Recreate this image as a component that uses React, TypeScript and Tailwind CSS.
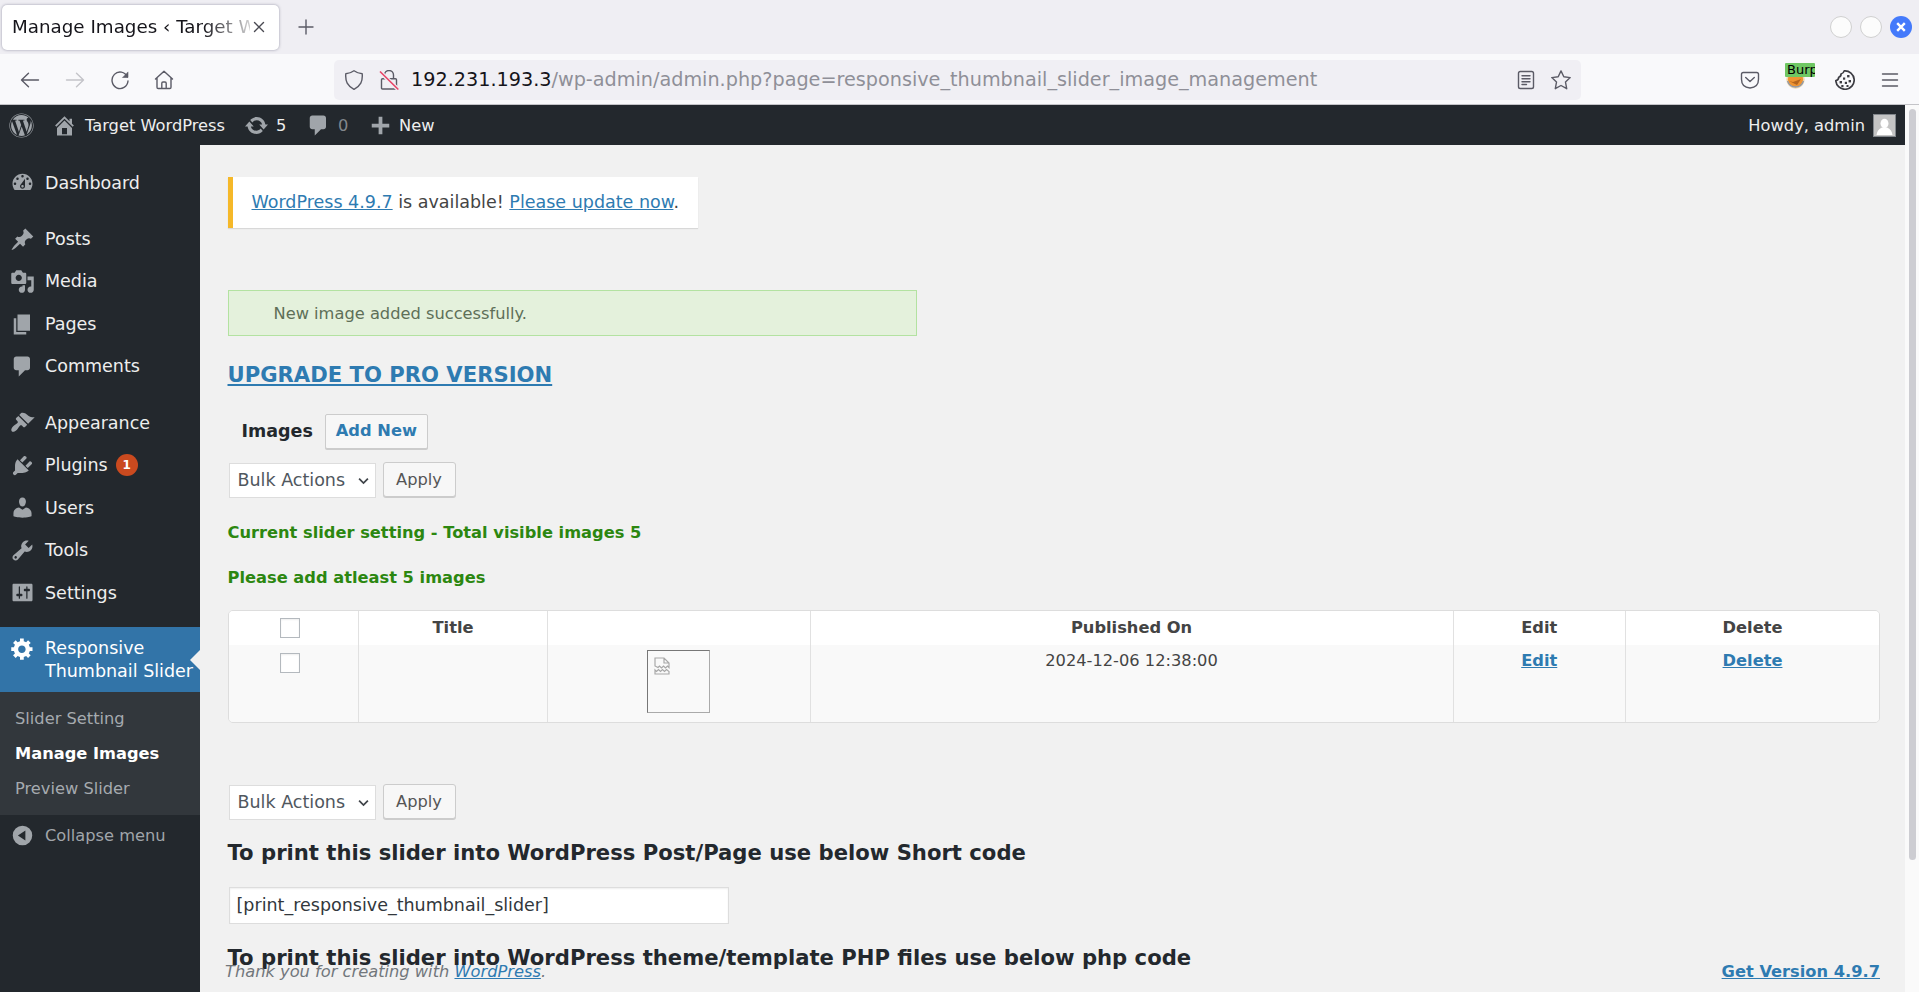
import type { ReactNode } from "react";
import { FaWordpress } from "react-icons/fa";

const dash = {
  dashboard:
    "M3.76 16h12.48c1.1-1.37 1.76-3.11 1.76-5 0-4.42-3.58-8-8-8s-8 3.58-8 8c0 1.89.66 3.63 1.76 5zM10 4c.55 0 1 .45 1 1s-.45 1-1 1-1-.45-1-1 .45-1 1-1zM6 6c.55 0 1 .45 1 1s-.45 1-1 1-1-.45-1-1 .45-1 1-1zm8 0c.55 0 1 .45 1 1s-.45 1-1 1-1-.45-1-1 .45-1 1-1zm-5.37 5.55L12 7v6c0 1.1-.9 2-2 2s-2-.9-2-2c0-.57.24-1.08.63-1.45zM4 10c.55 0 1 .45 1 1s-.45 1-1 1-1-.45-1-1 .45-1 1-1zm12 0c.55 0 1 .45 1 1s-.45 1-1 1-1-.45-1-1 .45-1 1-1zm-5 3c0-.55-.45-1-1-1s-1 .45-1 1 .45 1 1 1 1-.45 1-1z",
  post: "M10.44 3.02l1.82-1.82 6.36 6.35-1.83 1.82c-1.05-.68-2.48-.57-3.41.36l-.75.75c-.92.93-1.04 2.35-.35 3.41l-1.83 1.82-2.41-2.41-2.8 2.79c-.42.42-3.38 2.71-3.8 2.29s1.86-3.39 2.28-3.81l2.79-2.79L4.1 9.36l1.83-1.82c1.05.69 2.48.57 3.4-.36l.75-.75c.93-.92 1.05-2.35.36-3.41z",
  media:
    "M13 11V4c0-.55-.45-1-1-1h-1.67L9 1H5L3.67 3H2c-.55 0-1 .45-1 1v7c0 .55.45 1 1 1h10c.55 0 1-.45 1-1zM7 4.5c1.38 0 2.5 1.12 2.5 2.5S8.38 9.5 7 9.5 4.5 8.38 4.5 7 5.62 4.5 7 4.5zM14 6h5v10.5c0 1.38-1.12 2.5-2.5 2.5S14 17.88 14 16.5s1.12-2.5 2.5-2.5c.17 0 .34.02.5.05V9h-3V6zm-4 8.05V13h2v3.5c0 1.38-1.12 2.5-2.5 2.5S7 17.88 7 16.5 8.12 14 9.5 14c.17 0 .34.02.5.05z",
  page: "M6 15V2h10v13H6zm-1 1h8v2H3V5h2v11z",
  comments:
    "M5 2h9c1.1 0 2 .9 2 2v7c0 1.1-.9 2-2 2h-2l-5 5v-5H5c-1.1 0-2-.9-2-2V4c0-1.1.9-2 2-2z",
  appearance:
    "M14.48 11.06L7.41 3.99l1.5-1.5c.5-.56 2.3-.47 3.51.32 1.21.8 1.43 1.28 2.91 2.1 1.18.64 2.45 1.26 4.45.85zm-.71.71L6.7 4.7 4.93 6.47c-.39.39-.39 1.02 0 1.41l1.06 1.06c.39.39.39 1.03 0 1.42-.6.6-1.43 1.11-2.21 1.69-.35.26-.7.53-1.01.84C1.43 14.23.4 16.08 1.4 17.07c.99 1 2.84-.03 4.18-1.36.31-.31.58-.66.85-1.02.57-.78 1.08-1.61 1.69-2.21.39-.39 1.02-.39 1.41 0l1.06 1.06c.39.39 1.02.39 1.41 0z",
  plugins:
    "M13.11 4.36L9.87 7.6 8 5.73l3.24-3.24c.35-.34 1.05-.2 1.56.32.52.51.66 1.21.31 1.55zm-8 1.77l.91-1.12 9.01 9.01-1.19.84c-.71.71-2.63 1.16-3.82 1.16H6.14L4.9 17.26c-.59.59-1.54.59-2.12 0-.59-.58-.59-1.53 0-2.12l1.24-1.24v-3.88c0-1.13.4-3.19 1.09-3.89zm7.26 3.97l3.24-3.24c.34-.35 1.04-.21 1.55.31.52.51.66 1.21.31 1.55l-3.24 3.25z",
  users:
    "M10 9.25c-2.27 0-2.73-3.44-2.73-3.44C7 4.02 7.82 2 9.97 2c2.16 0 2.98 2.02 2.71 3.81 0 0-.41 3.44-2.68 3.44zm0 2.57L12.72 10c2.39 0 4.52 2.33 4.52 4.53v2.49s-3.65 1.13-7.24 1.13c-3.65 0-7.24-1.13-7.24-1.13v-2.49c0-2.25 1.94-4.48 4.47-4.48z",
  tools:
    "M16.68 9.77c-1.34 1.34-3.3 1.67-4.95.99l-5.41 6.52c-.99.99-2.59.99-3.58 0s-.99-2.59 0-3.57l6.52-5.42c-.68-1.65-.35-3.61.99-4.95 1.28-1.28 3.12-1.62 4.72-1.06l-2.89 2.89 2.82 2.82 2.86-2.87c.53 1.58.18 3.39-1.08 4.65zM3.81 16.21c.4.39 1.04.39 1.43 0 .4-.4.4-1.04 0-1.43-.39-.4-1.03-.4-1.43 0-.39.39-.39 1.03 0 1.43z",
  settings:
    "M18 16V4c0-.55-.45-1-1-1H3c-.55 0-1 .45-1 1v12c0 .55.45 1 1 1h14c.55 0 1-.45 1-1zM8 11h1c.55 0 1 .45 1 1s-.45 1-1 1H8v1.5c0 .28-.22.5-.5.5s-.5-.22-.5-.5V13H6c-.55 0-1-.45-1-1s.45-1 1-1h1V5.5c0-.28.22-.5.5-.5s.5.22.5.5V11zm5-2h-1c-.55 0-1-.45-1-1s.45-1 1-1h1V5.5c0-.28.22-.5.5-.5s.5.22.5.5V7h1c.55 0 1 .45 1 1s-.45 1-1 1h-1v5.5c0 .28-.22.5-.5.5s-.5-.22-.5-.5V9z",
  generic:
    "M18 12h-2.18c-.17.7-.44 1.35-.81 1.93l1.54 1.54-2.1 2.1-1.54-1.54c-.58.36-1.23.63-1.91.79V19H8v-2.18c-.68-.16-1.33-.43-1.91-.79l-1.54 1.54-2.12-2.12 1.54-1.54c-.36-.58-.63-1.23-.79-1.91H1V9.03h2.17c.16-.7.44-1.35.8-1.94L2.43 5.55l2.1-2.1 1.54 1.54c.58-.37 1.24-.64 1.93-.81V2h3v2.18c.68.16 1.33.43 1.91.79l1.54-1.54 2.12 2.12-1.54 1.54c.36.59.64 1.24.8 1.94H18V12zm-8.5 1.5c1.66 0 3-1.34 3-3s-1.34-3-3-3-3 1.34-3 3 1.34 3 3 3z",
  home: "M16 8.5l1.53 1.53-1.06 1.06L10 4.6l-6.47 6.49-1.06-1.06L10 2.5l4 4v-2h2v4zm-6-2.46l6 5.99V18H4v-5.97zM12 17v-5H8v5h4z",
  update:
    "M10.2 3.28c3.53 0 6.43 2.61 6.92 6h2.08l-3.5 4-3.5-4h2.32c-.45-1.97-2.21-3.45-4.32-3.45-1.45 0-2.73.71-3.54 1.78L4.95 5.66C6.23 4.2 8.11 3.28 10.2 3.28zm-.4 13.44c-3.52 0-6.43-2.61-6.92-6H.8l3.5-4c1.17 1.33 2.33 2.67 3.5 4H5.48c.45 1.97 2.21 3.45 4.32 3.45 1.45 0 2.73-.71 3.54-1.78l1.71 1.95c-1.28 1.46-3.15 2.38-5.25 2.38z",
  plus: "M17 8.5v3h-5.5V17h-3v-5.5H3v-3h5.5V3h3v5.5H17z",
  collapse:
    "M10 2.200a7.8 7.8 0 1 0 0 15.600a7.8 7.8 0 1 0 0-15.600zM12.300 6v8L6.300 10z",
};

type IconName = keyof typeof dash;

function Dashicon({ name, className = "" }: { name: IconName; className?: string }) {
  return (
    <svg viewBox="0 0 20 20" className={`h-[25px] w-[25px] shrink-0 ${className}`}>
      <path fill="currentColor" fillRule="evenodd" d={dash[name]} />
    </svg>
  );
}

function Stroke({ className = "", children }: { className?: string; children: ReactNode }) {
  return (
    <svg
      viewBox="0 0 20 20"
      fill="none"
      stroke="currentColor"
      strokeWidth="1.4"
      strokeLinecap="round"
      strokeLinejoin="round"
      className={`h-5 w-5 shrink-0 ${className}`}
    >
      {children}
    </svg>
  );
}

function TabStrip() {
  return (
    <div className="flex h-[54px] items-center bg-[#efeef3]">
      <div className="ml-[2px] flex h-[45px] w-[277px] items-center rounded-[5px] bg-white pl-[10px] shadow-[0_0_3px_rgba(80,80,110,0.55)]">
        <span className="w-[238px] overflow-hidden whitespace-nowrap bg-linear-to-r from-[#15141a] from-80% to-transparent to-105% bg-clip-text text-[18.3px] text-transparent">
          Manage Images ‹ Target W
        </span>
        <Stroke className="-ml-px text-[#4a4a52]">
          <path d="M5.500 5.500l9 9M14.500 5.500l-9 9" />
        </Stroke>
      </div>
      <Stroke className="ml-[17px] text-[#5b5b66]">
        <path d="M10 3v14M3 10h14" />
      </Stroke>
      <div className="ml-auto mr-[7px] flex items-center gap-[8px]">
        <span className="h-[22px] w-[22px] rounded-full border border-[#d0d0d0] bg-[#fcfcfc]" />
        <span className="h-[22px] w-[22px] rounded-full border border-[#d0d0d0] bg-[#fcfcfc]" />
        <span className="flex h-[22px] w-[22px] items-center justify-center rounded-full bg-[#447afb]">
          <svg viewBox="0 0 10 10" className="h-[10px] w-[10px]">
            <path d="M1.200 1.200l7.600 7.600M8.800 1.200L1.200 8.800" stroke="#fff" strokeWidth="2.400" />
          </svg>
        </span>
      </div>
    </div>
  );
}

function Toolbar() {
  return (
    <div className="flex h-[51px] items-center border-b border-[#c4c4c8] bg-[#f9f9fb] pl-5 pt-px text-[#5b5b66]">
      <Stroke>
        <path d="M18.500 10h-17M8.500 3.200L1.500 10l7 6.800" />
      </Stroke>
      <Stroke className="ml-[25px] text-[#c4c4c9]">
        <path d="M1.500 10h17M11.500 3.200l7 6.800l-7 6.800" />
      </Stroke>
      <Stroke className="ml-[25px]">
        <path d="M17.300 6.800A8 8.300 0 1 0 18 11" />
        <path d="M18 2.300v5.200h-5.200z" fill="currentColor" strokeWidth="0.6" />
      </Stroke>
      <Stroke className="ml-[24px]">
        <path d="M1.500 9L10 1.200L18.500 9M3 8v9.300q0 1.200 1.200 1.200h11.600q1.200 0 1.200-1.200V8M7.800 18.300v-5.100q0-1.200 1.200-1.200h2q1.200 0 1.200 1.200v5.100" />
      </Stroke>
      <div className="ml-[160px] flex h-[40px] w-[1247px] items-center rounded-[5px] bg-[#f0eff4] pl-[10px]">
        <Stroke>
          <path d="M10 .8q3.500 2.500 8.200 2.900q.5 5.500-1.400 9.500Q14.500 17.300 10 19.400Q5.500 17.300 3.200 13.200Q1.300 9.200 1.800 3.700Q6.500 3.300 10 .8z" />
        </Stroke>
        <Stroke className="ml-[15px]">
          <path d="M5.500 8.500V5a4.500 4.500 0 0 1 9 0v3.500M3.500 8.700h13q1 0 1 1v8.300q0 1-1 1h-13q-1 0-1-1V9.700q0-1 1-1z" />
          <path d="M1.800 2.500l17 16.500" stroke="#f0eff4" strokeWidth="4" />
          <path d="M1.500 2l17.300 17" stroke="#e8476a" strokeWidth="1.700" />
        </Stroke>
        <span className="ml-[12px] flex-1 whitespace-pre pt-px text-[19.22px] text-[#8f8f98]">
          <span className="text-[#15141a]">192.231.193.3</span>
          /wp-admin/admin.php?page=responsive_thumbnail_slider_image_management
        </span>
        <Stroke className="mr-[15px]">
          <path d="M4.300 1.500h11.400q1.800 0 1.800 1.800v13.400q0 1.800-1.800 1.800H4.300q-1.800 0-1.800-1.800V3.300q0-1.800 1.800-1.800zM6 5.700h8M6 8.700h8M6 11.700h8M6 14.500h4.500" />
        </Stroke>
        <Stroke className="mr-[10px]">
          <path d="M10 .9l2.800 5.900l6.400.8l-4.700 4.500l1.200 6.600L10 15.500l-5.700 3.200l1.200-6.600L.8 7.600l6.400-.8z" />
        </Stroke>
      </div>
      <Stroke className="ml-[159px]">
        <path d="M3.300 2.500h13.400q1.800 0 1.800 1.800v5q0 8.200-8.500 8.700Q1.500 17.500 1.500 9.300v-5q0-1.800 1.800-1.800zM5.700 7.500L10 11.500l4.300-4" />
      </Stroke>
      <div className="relative ml-[25px] h-[26px] w-[30px]">
        <svg viewBox="0 0 20 20" className="mt-[2px] h-[20px] w-[20px]">
          <circle cx="10.500" cy="10.500" r="9.200" fill="#f1d9ae" />
          <circle cx="10.500" cy="10.500" r="7.600" fill="#ef9431" />
          <path d="M4 12l4 1l8-3l-4 6z" fill="#b5651d" />
          <path d="M2.500 12q2 6 8 6q6 0 8-6" fill="none" stroke="#8f98a8" strokeWidth="1.300" />
        </svg>
        <span className="absolute left-0 top-[-4px] h-[14px] w-[30px] overflow-hidden rounded-[1px] bg-[#6fc763] pl-[2px] text-[13px] leading-[13px] text-black">
          Burp
        </span>
      </div>
      <Stroke className="ml-[20px] -scale-x-100 text-[#3c3c42]">
        <path d="M10.800.9A9.200 9.200 0 1 0 19.200 10.500Q16.500 10.300 16.300 7.200Q13.800 6.500 14 4Q11.500 3.500 10.800.9z" strokeWidth="1.700" />
        <g fill="currentColor" stroke="none">
          <rect x="5.500" y="5" width="2.400" height="2.400" />
          <rect x="9.800" y="7.500" width="2.200" height="2.200" />
          <rect x="4" y="10" width="2.400" height="2.400" />
          <rect x="8" y="11.800" width="2.200" height="2.200" />
          <rect x="13" y="11" width="2.400" height="2.400" />
          <rect x="6.500" y="15" width="2" height="2" />
          <rect x="11.500" y="15" width="2.200" height="2.200" />
        </g>
      </Stroke>
      <Stroke className="ml-[25px]">
        <path d="M2.500 4h15M2.500 10h15M2.500 16h15" />
      </Stroke>
    </div>
  );
}

function AdminBar() {
  return (
    <div className="flex h-[40px] items-center bg-[#23282d] pl-[9px] pr-[9px] pt-px text-[16.25px] text-[#eee]">
      <FaWordpress className="h-[25px] w-[25px] text-[#a0a5aa]" />
      <Dashicon name="home" className="ml-[18px] text-[#a0a5aa]" />
      <span className="ml-[8px] w-[140px] whitespace-nowrap pt-[2px]">Target WordPress</span>
      <Dashicon name="update" className="ml-[19px] text-[#a0a5aa]" />
      <span className="ml-[7px] w-[10px] pt-[2px]">5</span>
      <Dashicon name="comments" className="ml-[20px] text-[#a0a5aa]" />
      <span className="ml-[7px] w-[10px] pt-[2px] text-[#82878c]">0</span>
      <Dashicon name="plus" className="ml-[20px] text-[#a0a5aa]" />
      <span className="ml-[6px] pt-[2px]">New</span>
      <span className="ml-auto pt-[2px]">Howdy, admin</span>
      <svg viewBox="0 0 23 23" className="ml-[8px] h-[23px] w-[23px]">
        <rect x=".5" y=".5" width="22" height="22" fill="#c4c4c4" stroke="#82878c" />
        <ellipse cx="11.500" cy="9.500" rx="4" ry="4.700" fill="#fff" />
        <path d="M3.500 21q.5-5.500 5.500-7.500h5q5 2 5.500 7.500z" fill="#fff" />
      </svg>
    </div>
  );
}

function MenuItem({ icon, label, badge }: { icon: IconName; label: string; badge?: string }) {
  return (
    <a className="flex h-[42.5px] items-center pl-[10px] text-[17.5px] text-[#eee]">
      <Dashicon name={icon} className="text-[#a0a5aa]" />
      <span className="ml-[10px]">{label}</span>
      {badge && (
        <span className="ml-[8px] flex h-[22px] w-[22px] items-center justify-center rounded-full bg-[#ca4a1f] text-[12px] font-bold text-white">
          {badge}
        </span>
      )}
    </a>
  );
}

function Sidebar() {
  return (
    <nav className="w-[200px] shrink-0 bg-[#23282d] pt-[16.5px]">
      <MenuItem icon="dashboard" label="Dashboard" />
      <div className="h-[13.75px]" />
      <MenuItem icon="post" label="Posts" />
      <MenuItem icon="media" label="Media" />
      <MenuItem icon="page" label="Pages" />
      <MenuItem icon="comments" label="Comments" />
      <div className="h-[13.75px]" />
      <MenuItem icon="appearance" label="Appearance" />
      <MenuItem icon="plugins" label="Plugins" badge="1" />
      <MenuItem icon="users" label="Users" />
      <MenuItem icon="tools" label="Tools" />
      <MenuItem icon="settings" label="Settings" />
      <div className="h-[13.25px]" />
      <a className="relative flex h-[65px] bg-[#3274a8] pl-[10px] pt-[10px] text-[17.5px] leading-[22.5px] text-white">
        <Dashicon name="generic" className="-mt-[1px]" />
        <span className="ml-[10px] whitespace-nowrap">
          Responsive
          <br />
          Thumbnail Slider
        </span>
        <span className="absolute right-0 top-[22.5px] h-0 w-0 border-y-[10px] border-r-[10px] border-y-transparent border-r-[#f1f1f1]" />
      </a>
      <div className="flex h-[122.5px] flex-col bg-[#32373c] py-[8.75px] pl-[15px] text-[16.25px] leading-[35px] text-[#a5aaaf]">
        <a>Slider Setting</a>
        <a className="font-bold text-white">Manage Images</a>
        <a>Preview Slider</a>
      </div>
      <a className="flex h-[42px] items-center pl-[10px] text-[16.25px] text-[#a0a5aa]">
        <Dashicon name="collapse" />
        <span className="ml-[10px]">Collapse menu</span>
      </a>
    </nav>
  );
}

function BulkRow() {
  return (
    <div className="flex h-[36px] items-start pl-[1px]">
      <div className="mt-[1px] flex h-[35px] w-[147px] items-center justify-between border border-[#ddd] bg-white pl-[8px] pr-[6px] text-[17.5px] text-[#50575e]">
        <span className="whitespace-nowrap">Bulk Actions</span>
        <svg viewBox="0 0 12 8" className="h-[8px] w-[11px]">
          <path d="M1.200 1.300L6 6.300l4.800-5" fill="none" stroke="#40454a" strokeWidth="1.900" />
        </svg>
      </div>
      <button className="ml-[7px] h-[35px] w-[73px] rounded-[3px] border border-[#ccc] bg-[#f7f7f7] pt-[2px] text-[16.25px] text-[#555] shadow-[0_1px_0_#ccc]">
        Apply
      </button>
    </div>
  );
}

function Checkbox() {
  return <span className="h-[20px] w-[20px] border border-[#b4b9be] bg-white shadow-[inset_0_1px_2px_rgba(0,0,0,0.07)]" />;
}

const link = "text-[#2e7bb1] underline";

function BrokenImage() {
  return (
    <div className="mt-[5px] h-[63px] w-[63px] border border-b-[#aaa] border-l-[#777] border-r-[#aaa] border-t-[#777] p-[6px]">
      <svg viewBox="0 0 16 18" fill="none" stroke="#a8a8a8" strokeWidth="1.200" className="h-[18px] w-[16px]">
        <path d="M1 9V1h9l5 5v4.500l-1.500-1.500l-2 2l-2-2l-2 2l-2-2l-1.500 1.500zM10 1v5h5M1 17v-4l1.500 1.500l2-2l2 2l2-2l2 2l2-2l2.500 2V17z" />
      </svg>
    </div>
  );
}

function ImagesTable() {
  const cols = "grid grid-cols-[130.5px_189px_262.5px_643px_172.5px_1fr] divide-x divide-[#e1e1e1]";
  return (
    <div className="h-[113px] w-[1652.5px] overflow-hidden rounded-[5px] border border-[#ddd] text-[16.25px] text-[#444]">
      <div className={`${cols} h-[34px] bg-white text-center font-bold leading-[34px]`}>
        <div className="flex items-center justify-center pr-[6px]">
          <Checkbox />
        </div>
        <div>Title</div>
        <div />
        <div>Published On</div>
        <div>Edit</div>
        <div>Delete</div>
      </div>
      <div className={`${cols} h-[77px] bg-[#f9f9f9] text-center leading-[32px]`}>
        <div className="flex justify-center pr-[6px] pt-[8px]">
          <Checkbox />
        </div>
        <div />
        <div className="flex justify-center">
          <BrokenImage />
        </div>
        <div>2024-12-06 12:38:00</div>
        <div>
          <a className={`${link} font-bold`}>Edit</a>
        </div>
        <div>
          <a className={`${link} font-bold`}>Delete</a>
        </div>
      </div>
    </div>
  );
}

function Content() {
  return (
    <main className="relative flex flex-1 flex-col overflow-hidden bg-[#f1f1f1] pl-[27.5px] text-[16.25px] text-[#444]">
      <div className="mt-[32px] flex h-[51px] w-[470px] shrink-0 items-center border-l-[5px] border-[#f5b829] bg-white pl-[19px] text-[17.5px] shadow-[0_1px_1px_rgba(0,0,0,0.1)]">
        <p className="whitespace-nowrap">
          <a className={link}>WordPress 4.9.7</a> is available! <a className={link}>Please update now</a>.
        </p>
      </div>
      <div className="mt-[62px] flex h-[46px] w-[689px] shrink-0 items-center border border-[#b3e2a1] bg-[#e4f1dc] pl-[45px] pt-[2px] text-[#5e6f58]">
        New image added successfully.
      </div>
      <h2 className={`mt-[24px] h-[30px] text-[21.15px] font-bold leading-[30px] ${link}`}>UPGRADE TO PRO VERSION</h2>
      <div className="mt-[23px] flex h-[36px] items-center pl-[14px]">
        <b className="text-[17.5px] text-[#23282d]">Images</b>
        <a className="ml-[12px] flex h-[35px] w-[103px] items-center justify-center rounded-[2px] border border-[#ccc] bg-[#f7f7f7] font-bold text-[#2e7bb1] shadow-[0_1px_0_#ccc]">
          Add New
        </a>
      </div>
      <div className="mt-[13px]">
        <BulkRow />
      </div>
      <b className="mt-[25px] h-[20px] leading-[20px] text-[#2c8710]">Current slider setting - Total visible images 5</b>
      <b className="mt-[25px] h-[20px] leading-[20px] text-[#2c8710]">Please add atleast 5 images</b>
      <div className="mt-[22px]">
        <ImagesTable />
      </div>
      <div className="mt-[61px]">
        <BulkRow />
      </div>
      <h3 className="mt-[18px] h-[30px] whitespace-nowrap text-[21.15px] font-bold leading-[30px] text-[#23282d]">
        To print this slider into WordPress Post/Page use below Short code
      </h3>
      <div className="ml-[1px] mt-[19px] flex h-[37px] w-[500px] shrink-0 items-center border border-[#ddd] bg-white pl-[7px] text-[17.5px] text-[#32373c] shadow-[inset_0_1px_2px_rgba(0,0,0,0.07)]">
        [print_responsive_thumbnail_slider]
      </div>
      <h3 className="mt-[19px] h-[30px] whitespace-nowrap text-[21.15px] font-bold leading-[30px] text-[#23282d]">
        To print this slider into WordPress theme/template PHP files use below php code
      </h3>
      <footer className="absolute bottom-[10px] left-[25px] right-[25px] flex h-[20px] items-center justify-between">
        <i className="text-[#72777c]">
          Thank you for creating with <a className={link}>WordPress</a>.
        </i>
        <a className={`${link} font-bold`}>Get Version 4.9.7</a>
      </footer>
    </main>
  );
}

export default function App() {
  return (
    <div className="flex h-[992px] w-[1919px] flex-col overflow-hidden font-['DejaVu_Sans',sans-serif]">
      <TabStrip />
      <Toolbar />
      <div className="flex min-h-0 flex-1">
        <div className="flex w-[1905px] flex-col">
          <AdminBar />
          <div className="flex min-h-0 flex-1">
            <Sidebar />
            <Content />
          </div>
        </div>
        <div className="w-[14px] bg-[#fafafa] pl-[4px] pt-[4px]">
          <div className="h-[751px] w-[7px] rounded-full bg-[#cdcdd2]" />
        </div>
      </div>
    </div>
  );
}
